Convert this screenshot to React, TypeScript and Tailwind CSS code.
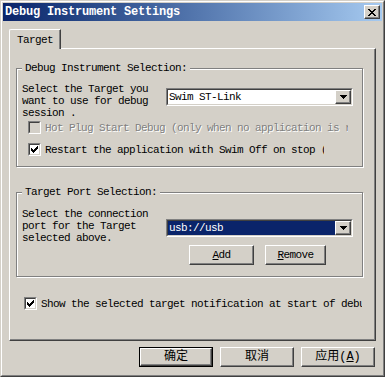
const raised =
  'border border-t-white border-l-white border-r-[#404040] border-b-[#404040] shadow-[inset_-1px_-1px_0_#808080]';

function Check({ color = '#000' }: { color?: string }) {
  const tops = [2, 3, 4, 3, 2, 1, 0];
  return (
    <svg width="7" height="7" viewBox="0 0 7 7" shapeRendering="crispEdges">
      {tops.map((y, x) => (
        <rect key={x} x={x} y={y} width="1" height="3" fill={color} />
      ))}
    </svg>
  );
}

function CloseGlyph() {
  const rows: [number, number][][] = [
    [[0, 2], [6, 2]],
    [[1, 2], [5, 2]],
    [[2, 4]],
    [[3, 2]],
    [[2, 4]],
    [[1, 2], [5, 2]],
    [[0, 2], [6, 2]],
  ];
  return (
    <svg width="8" height="7" viewBox="0 0 8 7" shapeRendering="crispEdges">
      {rows.map((segs, y) =>
        segs.map(([x, w], i) => <rect key={`${y}-${i}`} x={x} y={y} width={w} height="1" fill="#000" />)
      )}
    </svg>
  );
}

function Arrow() {
  return (
    <svg width="7" height="4" viewBox="0 0 7 4" shapeRendering="crispEdges">
      <rect x="0" y="0" width="7" height="1" fill="#000" />
      <rect x="1" y="1" width="5" height="1" fill="#000" />
      <rect x="2" y="2" width="3" height="1" fill="#000" />
      <rect x="3" y="3" width="1" height="1" fill="#000" />
    </svg>
  );
}

function Box({ checked, disabled }: { checked?: boolean; disabled?: boolean }) {
  return (
    <div className="w-[13px] h-[13px] shrink-0 border border-t-[#808080] border-l-[#808080] border-r-white border-b-white">
      <div
        className={`w-full h-full border border-t-[#404040] border-l-[#404040] border-r-[#d4d0c8] border-b-[#d4d0c8] flex items-center justify-center ${
          disabled ? 'bg-[#d4d0c8]' : 'bg-white'
        }`}
      >
        {checked && <Check />}
      </div>
    </div>
  );
}

function Combo({ value, selected }: { value: string; selected?: boolean }) {
  return (
    <div className="w-[187px] h-[18px] border border-t-[#808080] border-l-[#808080] border-r-white border-b-white">
      <div className="h-full flex border border-t-[#404040] border-l-[#404040] border-r-[#d4d0c8] border-b-[#d4d0c8] bg-white">
        <div
          className={`flex-1 flex items-center pl-px whitespace-nowrap ${
            selected ? 'bg-[#0a246a] text-white' : ''
          }`}
        >
          {value}
        </div>
        <div className={`w-[16px] h-full flex items-center justify-center bg-[#d4d0c8] ${raised}`}>
          <Arrow />
        </div>
      </div>
    </div>
  );
}

function Btn({ w, def, children }: { w: string; def?: boolean; children: React.ReactNode }) {
  return (
    <div className={`h-[20px] ${w} ${def ? 'border border-black' : ''}`}>
      <div className={`h-full flex items-center justify-center ${raised}`}>{children}</div>
    </div>
  );
}

function Group({ label, h, children }: { label: string; h: string; children: React.ReactNode }) {
  return (
    <div
      className={`relative w-[347px] ${h} border border-[#808080] shadow-[inset_1px_1px_0_#fff,1px_1px_0_#fff]`}
    >
      <span className="absolute left-[5px] -top-[7px] px-[3px] bg-[#d4d0c8] leading-[12px] whitespace-nowrap">
        {label}
      </span>
      {children}
    </div>
  );
}

export default function App() {
  return (
    <div className="w-[385px] h-[377px] bg-[#d4d0c8] border border-t-[#d4d0c8] border-l-[#d4d0c8] border-r-[#404040] border-b-[#404040] font-['Liberation_Mono','Noto_Sans_CJK_SC',monospace] text-[11px] leading-[12px] tracking-[-0.6px] text-black">
      <div className="h-full p-px flex flex-col border border-t-white border-l-white border-r-[#808080] border-b-[#808080]">
        {/* caption */}
        <div className="h-[18px] shrink-0 flex items-center pl-[2px] pr-[2px] bg-linear-to-r from-[#0a246a] to-[#a6caf0]">
          <span className="flex-1 text-white font-bold text-[12px] tracking-[-0.2px]">
            Debug Instrument Settings
          </span>
          <div className={`w-[16px] h-[14px] flex items-center justify-center bg-[#d4d0c8] ${raised}`}>
            <CloseGlyph />
          </div>
        </div>

        {/* tabs */}
        <div className="mt-[8px] ml-[6px] w-[367px]">
          <div className="relative z-10 -mb-px w-[52px] h-[20px] flex items-center justify-center bg-[#d4d0c8] rounded-tl-[2px] border-t border-l border-r border-t-white border-l-white border-r-[#404040] shadow-[inset_-1px_0_0_#808080]">
            Target
          </div>
          <div className={`h-[293px] ${raised}`}>
            <div className="ml-[6px] pt-[19px]">
              <Group label="Debug Instrument Selection:" h="h-[99px]">
                <div className="flex mt-[14px] pl-[5px]">
                  <div className="w-[144px]">
                    Select the Target you
                    <br />
                    want to use for debug
                    <br />
                    session .
                  </div>
                  <div className="mt-[5px]">
                    <Combo value="Swim ST-Link" />
                  </div>
                </div>
                <div className="flex items-center gap-[4px] mt-[2px] pl-[11px] h-[13px]">
                  <Box disabled />
                  <span className="w-[303px] overflow-hidden whitespace-nowrap text-[#808080] [text-shadow:1px_1px_0_#fff]">
                    Hot Plug Start Debug (only when no application is running)
                  </span>
                </div>
                <div className="flex items-center gap-[4px] mt-[9px] pl-[11px] h-[13px]">
                  <Box checked />
                  <span className="w-[279px] overflow-hidden whitespace-nowrap">
                    Restart the application with Swim Off on stop (recommended)
                  </span>
                </div>
              </Group>

              <div className="mt-[25px]">
                <Group label="Target Port Selection:" h="h-[85px]">
                  <div className="flex mt-[15px] pl-[5px]">
                    <div className="w-[144px]">
                      Select the connection
                      <br />
                      port for the Target
                      <br />
                      selected above.
                    </div>
                    <div className="mt-[11px]">
                      <Combo value="usb://usb" selected />
                      <div className="flex gap-[11px] mt-[8px] pl-[23px]">
                        <Btn w="w-[65px]">
                          <span className="underline underline-offset-1">A</span>dd
                        </Btn>
                        <Btn w="w-[61px]">
                          <span className="underline underline-offset-1">R</span>emove
                        </Btn>
                      </div>
                    </div>
                  </div>
                </Group>
              </div>

              <div className="flex items-center gap-[4px] mt-[20px] ml-[8px] h-[13px]">
                <Box checked />
                <span className="w-[321px] overflow-hidden whitespace-nowrap">
                  Show the selected target notification at start of debug session
                </span>
              </div>
            </div>
          </div>
        </div>

        {/* dialog buttons */}
        <div className="flex gap-[7px] mt-[6px] ml-[136px] text-[12px] tracking-normal">
          <Btn w="w-[74px]" def>
            确定
          </Btn>
          <Btn w="w-[74px]">取消</Btn>
          <Btn w="w-[74px]">
            应用(<span className="underline underline-offset-1">A</span>)
          </Btn>
        </div>
      </div>
    </div>
  );
}
